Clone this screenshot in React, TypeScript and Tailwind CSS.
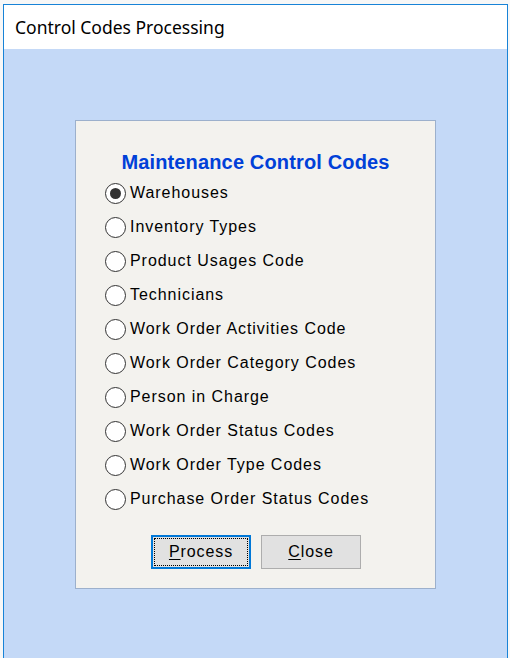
import React, { useState } from "react";

const options: string[] = [
  "Warehouses",
  "Inventory Types",
  "Product Usages Code",
  "Technicians",
  "Work Order Activities Code",
  "Work Order Category Codes",
  "Person in Charge",
  "Work Order Status Codes",
  "Work Order Type Codes",
  "Purchase Order Status Codes",
];

const Radio: React.FC<{ label: string; checked: boolean; onSelect: () => void }> = ({
  label,
  checked,
  onSelect,
}) => (
  <div className="flex h-[34px] items-center cursor-default" onClick={onSelect}>
    <span className="flex h-[21px] w-[21px] items-center justify-center rounded-full border border-[#333333] bg-white">
      {checked && <span className="h-[11px] w-[11px] rounded-full bg-[#333333]" />}
    </span>
    <span className="ml-[4px] text-[16px] tracking-[0.95px] text-black">{label}</span>
  </div>
);

export default function App() {
  const [selected, setSelected] = useState(0);

  return (
    <div
      className="h-[658px] w-[510px] overflow-hidden bg-[#f7f7f7] pl-[3px] pt-[4px]"
      style={{ fontFamily: '"Liberation Sans", Arial, sans-serif' }}
    >
      <div className="flex h-[654px] w-[505px] flex-col border-l border-r border-t border-[#1883d7]">
        <div className="flex h-[44px] items-center bg-white pl-[11px]">
          <span
            className="text-[17.5px] text-black"
            style={{ fontFamily: '"Noto Sans", "Open Sans", sans-serif' }}
          >
            Control Codes Processing
          </span>
        </div>
        <div className="flex-1 bg-[#c4d9f7] pl-[71px] pt-[71px]">
          <div className="w-[361px] border border-[#9cb0cc] bg-[#f3f2ee] pl-[29px] pt-[29px] pb-[19px]">
            <h1 className="mr-[29px] text-center text-[20px] leading-[24px] font-bold tracking-[0.15px] text-[#0040d8]">
              Maintenance Control Codes
            </h1>
            <div className="mt-[2px]">
              {options.map((o, i) => (
                <Radio key={o} label={o} checked={selected === i} onSelect={() => setSelected(i)} />
              ))}
            </div>
            <div className="mt-[19px] flex gap-[10px] pl-[46px]">
              <button className="h-[34px] w-[100px] border-2 border-[#0078d7] bg-[#e1e1e1] p-[1px] text-[16px] tracking-[0.9px] text-black">
                <span className="flex h-full w-full items-center justify-center border border-dotted border-black">
                  <span className="underline underline-offset-2">P</span>rocess
                </span>
              </button>
              <button className="h-[34px] w-[100px] border border-[#adadad] bg-[#e1e1e1] text-[16px] tracking-[0.9px] text-black">
                <span className="underline underline-offset-2">C</span>lose
              </button>
            </div>
          </div>
        </div>
      </div>
    </div>
  );
}
